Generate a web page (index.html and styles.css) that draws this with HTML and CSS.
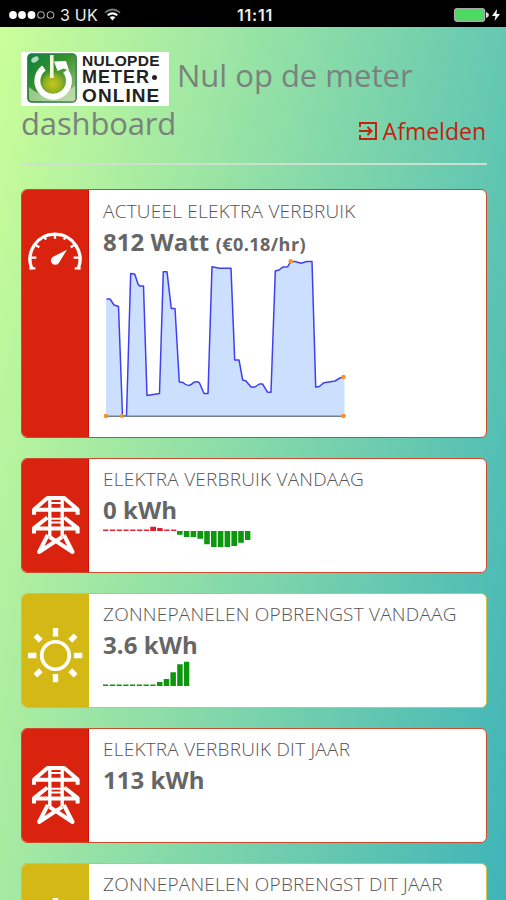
FILE: index.html
```html
<!DOCTYPE html>
<html lang="nl">
<head>
<meta charset="utf-8">
<title>Nul op de meter dashboard</title>
<link rel="stylesheet" href="styles.css">
</head>
<body>
<svg class="defs" width="0" height="0">
  <symbol id="pylon" viewBox="60 128 155 182">
    <g fill="none" stroke="#fff" stroke-width="12" stroke-linejoin="round">
      <path d="M72 190V174L112 140H162L202 174V190M72 175H202"/>
      <path d="M72 246V230L112 198M162 198L202 230V246M72 231H202"/>
      <path stroke-width="10" d="M119 139V254M156 139V254"/>
      <path stroke-width="6" d="M118 155H156M118 202H156M118 213H156"/>
      <path stroke-width="12" d="M113 250L87 301L156 256M161 250L187 301L118 256"/>
    </g>
  </symbol>
  <symbol id="sun" viewBox="55 129 164 164">
    <g fill="none" stroke="#fff">
      <circle cx="137" cy="211" r="41" stroke-width="11"/>
      <path stroke-width="16" d="M137 129V154M137 266V291M55 211H80M192 211H217M77 151L93 167M181 255L197 271M77 271L93 255M181 167L197 151"/>
    </g>
  </symbol>
</svg>

<div class="statusbar">
  <div class="carrier">
    <svg width="46" height="10" viewBox="0 0 46 10"><g fill="#fff"><circle cx="4" cy="5" r="3.900"/><circle cx="13" cy="5" r="3.900"/><circle cx="22.500" cy="5" r="3.900"/></g><g fill="none" stroke="#aaa" stroke-width="1.100"><circle cx="32" cy="5" r="3.300"/><circle cx="41.500" cy="5" r="3.300"/></g></svg>
    <span>3 UK</span>
    <svg width="17" height="13" viewBox="0 0 17 13" fill="none" stroke="#fff"><path stroke="#777" stroke-width="1.700" d="M1 4.600Q8.500-1.600 16 4.600"/><path stroke-width="2" d="M3.700 7.300Q8.500 3.400 13.300 7.300"/><path fill="#fff" stroke="none" d="M5.600 9.300Q8.500 7.200 11.400 9.300L8.500 12.400Z"/></svg>
  </div>
  <div class="clock">11:11</div>
  <div class="battery">
    <svg width="48" height="16" viewBox="0 0 48 16"><rect x="1.600" y="1.600" width="30" height="12.600" rx="2.500" fill="#4cd964" stroke="#aaa" stroke-width="1.400"/><path fill="#ddd" d="M33 5Q36 6 36 8T33 11Z"/><path fill="#fff" d="M44 2L39 9H42.500L41.500 14L47 7H43.500Z"/></svg>
  </div>
</div>

<main>
  <header>
    <h1><span class="logo"><svg width="50" height="50" viewBox="0 0 50 50">
        <defs>
          <linearGradient id="lg" x1="0" y1="0" x2="1" y2="1"><stop offset="0" stop-color="#07803c"/><stop offset=".45" stop-color="#39912d"/><stop offset="1" stop-color="#a9c98a"/></linearGradient>
          <radialGradient id="glow" cx=".5" cy=".6" r=".5"><stop offset="0" stop-color="#c7c51b"/><stop offset=".55" stop-color="#8fb020"/><stop offset="1" stop-color="#3b8c2b" stop-opacity="0"/></radialGradient>
        </defs>
        <rect x=".8" y=".8" width="48.400" height="48.400" rx="4" fill="url(#lg)" stroke="#2d7c48" stroke-width="1.300"/>
        <path d="M2 34Q22 52 48 33V45Q48 48 45 48H5Q2 48 2 45Z" fill="#d9edc8" opacity=".6"/>
        <circle cx="26" cy="28" r="16" fill="url(#glow)"/>
        <path d="M17 15A15.800 15.800 0 1 0 38.500 18" fill="none" stroke="#fff" stroke-width="6"/>
        <path d="M27 8.500L39 8L42 17.500L36.500 15.500L30.500 18Z" fill="#fff"/>
        <path d="M24.800 2V25" stroke="#f4f7dc" stroke-width="3.600"/>
        <ellipse cx="8" cy="6.500" rx="4" ry="2.600" fill="#d5efdc" opacity=".8" transform="rotate(-30 8 6.500)"/>
      </svg><span class="wordmark"><span class="w1">NULOPDE</span><span class="w2">METER<i></i></span><span class="w3">ONLINE</span></span></span><span class="title1">Nul op de meter</span><span class="title2">dashboard</span></h1>
    <a class="logout"><svg width="18" height="18" viewBox="0 0 18 18" fill="none" stroke="#c51f10" stroke-width="1.900"><path d="M1 5V1H17V17H1V13"/><path d="M0 9H12M8.500 5L12.500 9L8.500 13"/></svg><span>Afmelden</span></a>
  </header>

  <section class="card red tall">
    <div class="side gauge"><svg width="56" height="42" viewBox="52 152 168 126"><path d="M67 272A75 75 0 1 1 205 272" fill="none" stroke="#fff" stroke-width="10"/><path stroke="#fff" stroke-width="7" d="M136 164V181M102 171L109 184M170 171L163 184M76 199L89 207M196 199L183 207M62 238H80M210 238H192M59 270H77M195 270H213"/><path fill="#fff" d="M172 214L148 253A13 13 0 1 1 129 236Z"/></svg></div>
    <div class="body">
      <h2>ACTUEEL ELEKTRA VERBRUIK</h2>
      <p>812 Watt <small>(€0.18/hr)</small></p>
      <svg class="usage" width="245" height="161" viewBox="103 258 245 161">
        <path fill="#ccdfff" d="M106 416V299L110 299L114 305L118.500 306.500L122.500 416H126.500L130.700 273.500L134.700 274L138 284L139.500 286H143.500L147 395.500L159.500 393.500L163.300 271.800H167L171.300 308.500H175L179.300 382L183 382.500L188.700 386L196.700 382H199L204 393.500H208L212 266.700L219.500 268.300H231L234.700 360H239L242.700 380L246 381L251 387H255L259.300 384H262.500L267.700 392.300H271L275.300 271L279 270L282.300 267.300L287.700 266.700L290.700 261.500H295L301 263.300L306.700 261.500H312L315.700 387L319.300 386.500L324 382.700L335 381L344.500 377V416Z"/>
        <path fill="none" stroke="#3f3ff0" stroke-width="1.500" stroke-linejoin="round" d="M106.500 299H110L114 305L118.500 306.500L122.500 416H126.500L130.700 273.500L134.700 274L138 284L139.500 286H143.500L147 395.500L159.500 393.500L163.300 271.800H167L171.300 308.500H175L179.300 382L183 382.500Q188.700 388 193 383Q197 380.500 199.500 383L204 393.500H208L212 266.700L219.500 268.300H231L234.700 360H239L242.700 380L246 381L251 387H255L259.300 384H262.500L267.700 392.300H271L275.300 271L279 270L282.300 267.300L287.700 266.700L290.700 261.500H295L301 263.300L306.700 261.500H312L315.700 387L319.300 386.500L324 382.700L335 381L340 378L344 377"/>
        <path stroke="#75808d" stroke-width="1.500" d="M106 416.200H344"/>
        <g fill="#f7931e"><circle cx="106" cy="416" r="2.300"/><circle cx="122" cy="416" r="2"/><circle cx="343.500" cy="416" r="2.300"/><circle cx="343.500" cy="377" r="2.300"/><circle cx="290.700" cy="261.200" r="2.300"/></g>
      </svg>
    </div>
  </section>

  <section class="card red">
    <div class="side pylon"><svg width="52" height="61"><use href="#pylon"/></svg></div>
    <div class="body">
      <h2>ELEKTRA VERBRUIK VANDAAG</h2>
      <p>0 kWh</p>
      <svg class="spark" width="150" height="28" viewBox="0 520 150 28">
        <path stroke="#e32636" stroke-width="1.400" stroke-dasharray="5.300 1.500" d="M0 530.300H73.500"/>
        <path fill="#dc1f2c" d="M47.300 526.800H53V531H47.300ZM54.300 528H59.500V531H54.300Z"/>
        <path fill="#0c970c" d="M74 531h5.600v3.700h-5.600zM80.800 531h5.600v6h-5.600zM87.600 531h5.600v6h-5.600zM94.400 531h5.600v7.700h-5.600zM101.200 531h5.600v13.300h-5.600zM108 531h5.600v16h-5.600zM114.800 531h5.600v16h-5.600zM121.600 531h5.600v16h-5.600zM128.400 531h5.600v15h-5.600zM135.200 531h5.600v11.700h-5.600zM142 531h5.400v9h-5.400z"/>
      </svg>
    </div>
  </section>

  <section class="card yellow">
    <div class="side sun"><svg width="55" height="55"><use href="#sun"/></svg></div>
    <div class="body">
      <h2>ZONNEPANELEN OPBRENGST VANDAAG</h2>
      <p>3.6 kWh</p>
      <svg class="spark" width="90" height="32" viewBox="0 655 90 32">
        <path stroke="#0c970c" stroke-width="1.500" stroke-dasharray="5.300 1.450" d="M0 685.300H53"/>
        <path fill="#0c970c" d="M54 682h5.500v4h-5.500zM60.700 679h5.500v7h-5.500zM67.400 672.300h5.500v13.700h-5.500zM74.200 664.300h5.500v21.700h-5.500zM81 661.700h5.300v24.300h-5.300z"/>
      </svg>
    </div>
  </section>

  <section class="card red">
    <div class="side pylon"><svg width="52" height="61"><use href="#pylon"/></svg></div>
    <div class="body">
      <h2>ELEKTRA VERBRUIK DIT JAAR</h2>
      <p>113 kWh</p>
    </div>
  </section>

  <section class="card yellow last">
    <div class="side sun"><svg width="55" height="55"><use href="#sun"/></svg></div>
    <div class="body">
      <h2>ZONNEPANELEN OPBRENGST DIT JAAR</h2>
    </div>
  </section>
</main>
</body>
</html>
```
FILE: styles.css
```css
* { box-sizing: border-box; }
html { height: 900px; overflow: hidden; }
body {
  margin: 0;
  height: 900px;
  overflow: hidden;
  font-family: "Open Sans", sans-serif;
  color: #666;
  background: linear-gradient(102deg, #cf9 0%, #3fb4b9 100%);
}
svg { display: block; flex: none; }
.defs { position: absolute; }
.statusbar {
  display: grid;
  grid-template-columns: 1fr auto 1fr;
  align-items: center;
  height: 27px;
  padding: 2px 5px 0 9px;
  background: #000;
  color: #eee;
  font: 16px/24px Inter, sans-serif;
}
.carrier { display: flex; align-items: center; gap: 5px; }
.carrier span { letter-spacing: .2px; margin-right: 1px; }
.clock { font-weight: 600; font-size: 16px; letter-spacing: .8px; }
.battery { display: flex; justify-content: flex-end; }
main { height: 873px; overflow: hidden; padding: 25px 19px 0 21px; }
header {
  display: flex;
  flex-direction: column;
  height: 113px;
  border-bottom: 2px solid #cddfcf;
  margin-bottom: 24px;
}
h1 {
  display: flex;
  flex-wrap: wrap;
  margin: 0;
  height: 78px;
  font-weight: 400;
  font-size: 31px;
  color: #7a827d;
}
.logo {
  display: flex;
  width: 148px;
  height: 54px;
  padding: 1px 0 0 6px;
  background: #fff;
}
.wordmark {
  display: flex;
  flex-direction: column;
  margin-left: 5px;
  color: #222;
  font-family: "Liberation Sans", sans-serif;
  font-weight: 700;
  white-space: nowrap;
}
.w1 { font-size: 15.5px; line-height: 15px; letter-spacing: .3px; }
.w2 { display: flex; align-items: center; font-size: 18px; line-height: 18px; letter-spacing: 1px; }
.w2 i { width: 5px; height: 5px; margin-left: 2px; border-radius: 50%; background: #222; }
.w3 { font-size: 19px; line-height: 19px; letter-spacing: 1.1px; }
.title1 { width: 300px; margin-left: 8px; line-height: 46px; height: 53px; white-space: nowrap; }
.title2 { width: 300px; line-height: 34px; letter-spacing: -.15px; }
.logout {
  display: flex;
  align-self: flex-end;
  align-items: center;
  gap: 6px;
  margin: -14px 1px 0 0;
  height: 30px;
  color: #c51f10;
  font-size: 23px;
}
.card {
  display: flex;
  width: 466px;
  height: 115px;
  margin-bottom: 20px;
  border: 1px solid;
  border-radius: 6px;
  overflow: hidden;
  background: #fff;
}
.card.tall { height: 249px; }
.card.last { margin-bottom: 0; }
.red { border-color: #cf4a2c; }
.yellow { border-color: #d3c04b; }
.side { display: flex; width: 67px; flex: none; justify-content: center; align-items: flex-start; }
.red .side { background: #d9230f; border-right: 1px solid #cc1008; }
.yellow .side { background: #d4b816; }
.gauge { padding-top: 39px; }
.pylon { padding: 35px 0 0 1px; }
.sun { padding-top: 34px; }
.body { padding-left: 14px; }
h2 { margin: 7px 0 0; font-size: 19px; line-height: 26px; font-weight: 300; letter-spacing: .22px; color: #555; white-space: nowrap; }
.tall h2 { margin-top: 8px; }
p { margin: 0; font-size: 24px; line-height: 36px; font-weight: 700; letter-spacing: .05px; color: #666; }
small { font-size: 18px; letter-spacing: .45px; }
.usage { margin-top: -4px; }
.spark { margin-top: -8px; }
```
